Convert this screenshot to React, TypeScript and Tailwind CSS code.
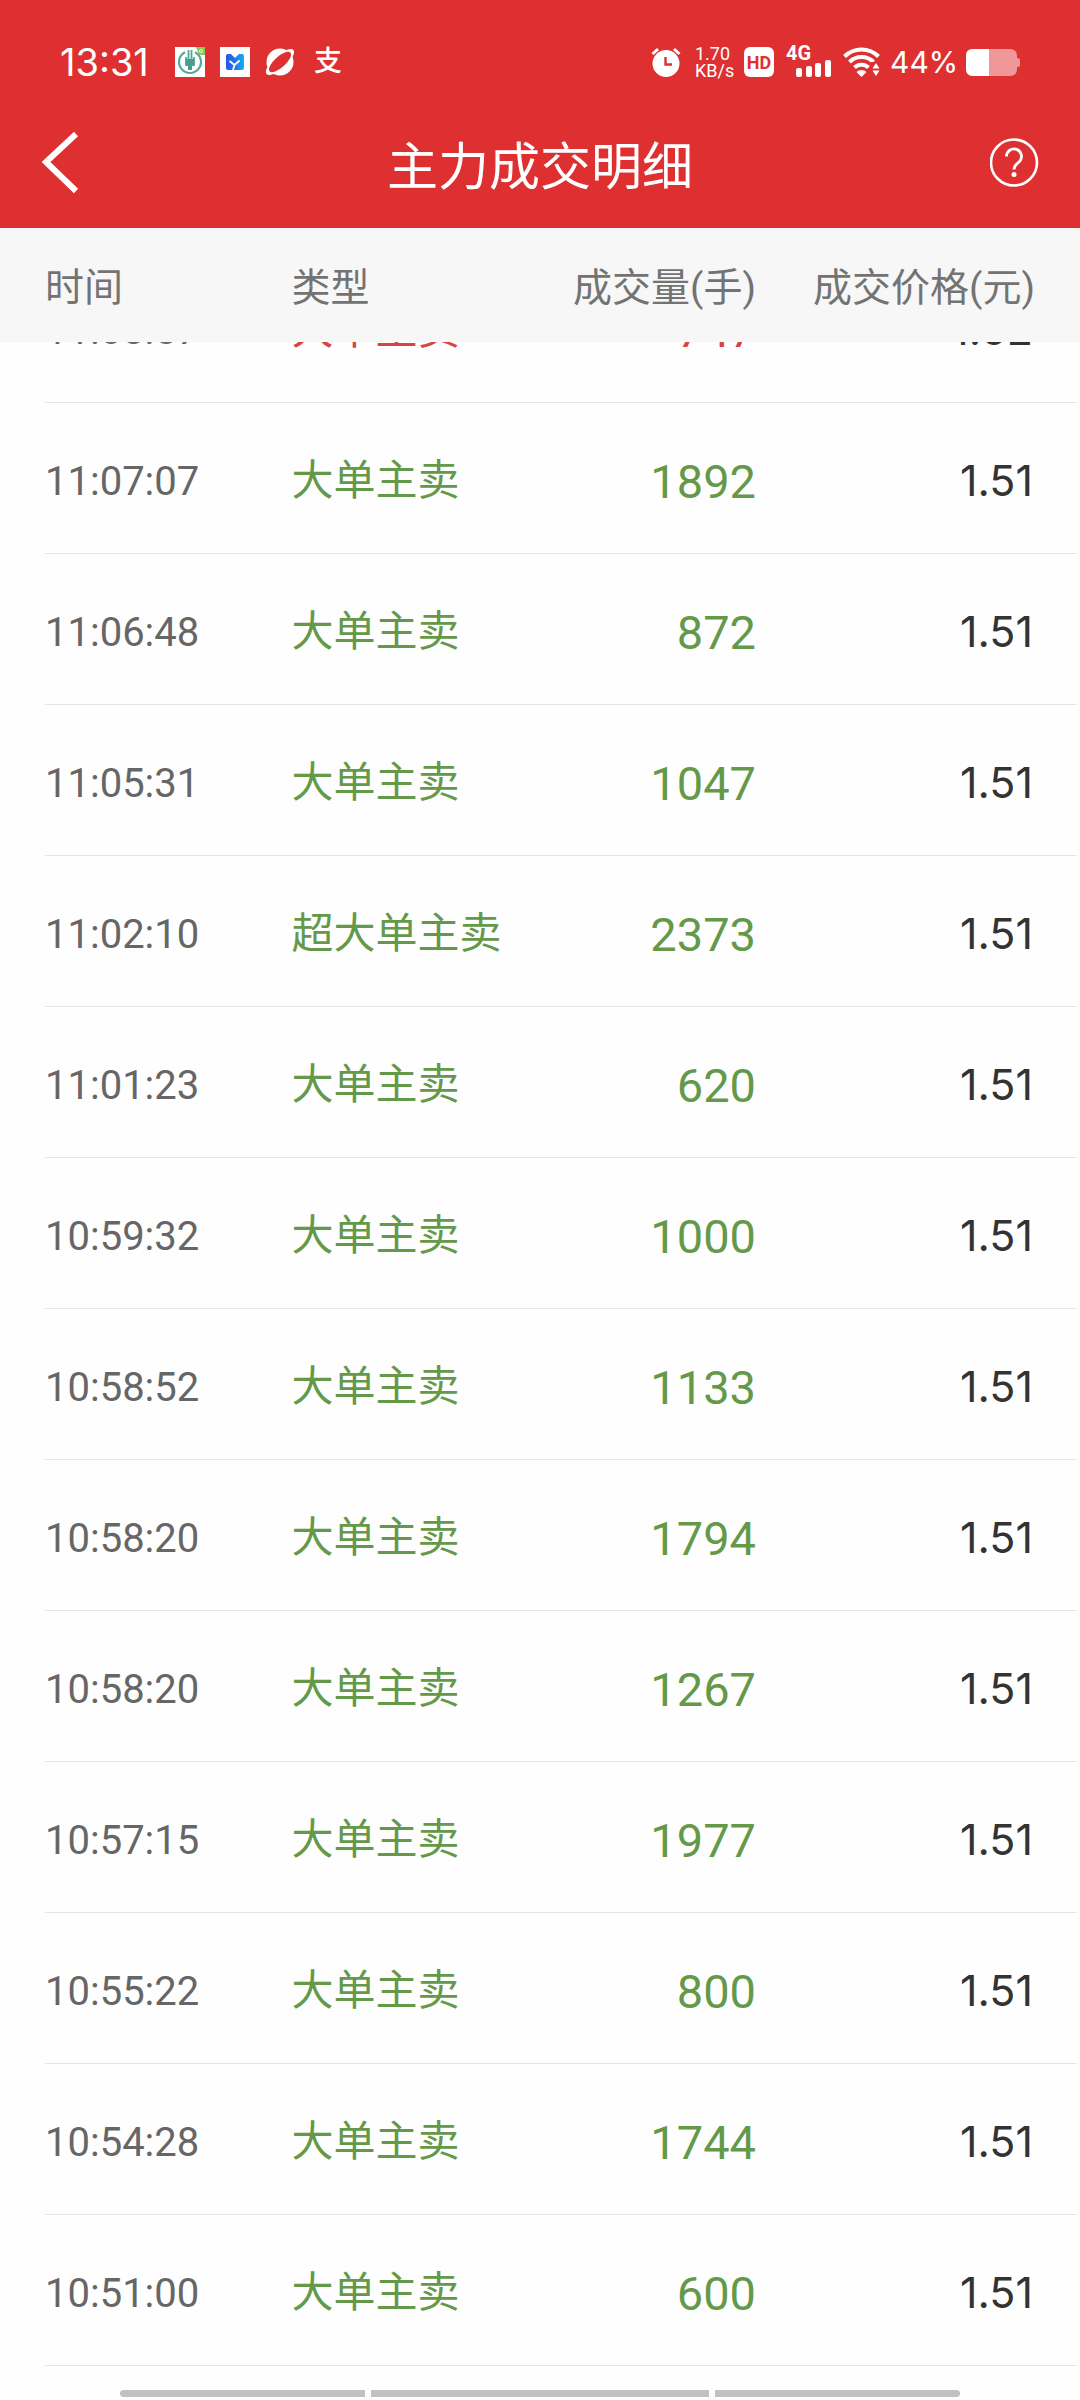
import { useLayoutEffect, useRef } from 'react';

const trades = [
    { time: '11:08:57', type: '大单主卖', volume: 747, price: '1.52', up: true },
    { time: '11:07:07', type: '大单主卖', volume: 1892, price: '1.51' },
    { time: '11:06:48', type: '大单主卖', volume: 872, price: '1.51' },
    { time: '11:05:31', type: '大单主卖', volume: 1047, price: '1.51' },
    { time: '11:02:10', type: '超大单主卖', volume: 2373, price: '1.51' },
    { time: '11:01:23', type: '大单主卖', volume: 620, price: '1.51' },
    { time: '10:59:32', type: '大单主卖', volume: 1000, price: '1.51' },
    { time: '10:58:52', type: '大单主卖', volume: 1133, price: '1.51' },
    { time: '10:58:20', type: '大单主卖', volume: 1794, price: '1.51' },
    { time: '10:58:20', type: '大单主卖', volume: 1267, price: '1.51' },
    { time: '10:57:15', type: '大单主卖', volume: 1977, price: '1.51' },
    { time: '10:55:22', type: '大单主卖', volume: 800, price: '1.51' },
    { time: '10:54:28', type: '大单主卖', volume: 1744, price: '1.51' },
    { time: '10:51:00', type: '大单主卖', volume: 600, price: '1.51' },
];

function BankIcon() {
    return (
        <svg width="30" height="30" viewBox="0 0 30 30">
            <rect width="30" height="30" fill="#fff" />
            <path d="M21 0h9v8h-6z" fill="#8cc653" />
            <circle cx="26" cy="4" r="1.5" fill="none" stroke="#e4f5d8" />
            <path d="M10 5.2A11 11 0 1 0 20 5.200" fill="none" stroke="#55a99a" strokeWidth="2.200" />
            <path d="M11 10v8h8v-8M13.500 3v14M16.500 3v14" fill="none" stroke="#4da795" strokeWidth="1.800" />
            <path d="M11 12h8v5l-2 2v4h-4v-4l-2-2z" fill="#469d8c" />
        </svg>
    );
}

function MailIcon() {
    return (
        <svg width="30" height="30" viewBox="0 0 30 30">
            <defs>
                <linearGradient id="mail" x1="0" x2="1">
                    <stop offset="0" stopColor="#2557e6" />
                    <stop offset="0.500" stopColor="#1f74ee" />
                    <stop offset="1" stopColor="#12b4f4" />
                </linearGradient>
            </defs>
            <rect width="30" height="30" fill="#fff" />
            <path d="M6 9q0-2 2-2h3l4 4 4-4h3q2 0 2 2v12q0 2-2 2H8q-2 0-2-2z" fill="url(#mail)" />
            <path d="M9.500 14l5 4 5-4.500M14.500 18l-1.500 5" fill="none" stroke="#fff" strokeWidth="1.800" />
        </svg>
    );
}

function PlanetIcon() {
    return (
        <svg width="30" height="30" viewBox="0 0 30 30">
            <circle cx="15" cy="15" r="13.500" fill="#fff" />
            <ellipse cx="15" cy="15" rx="18" ry="6.500" transform="rotate(-42 15 15)" fill="#fff" />
            <ellipse cx="15" cy="15" rx="14" ry="5.500" transform="rotate(-42 15 15)" fill="#de3031" />
        </svg>
    );
}

function AlarmIcon() {
    return (
        <svg width="30" height="30" viewBox="0 0 30 30">
            <path d="M1.500 7 7 2M28.500 7 23 2" stroke="#fff" strokeWidth="3" />
            <circle cx="15" cy="16.500" r="13.500" fill="#fff" />
            <path d="M14.500 10v7.500H21" fill="none" stroke="#de3031" strokeWidth="2.400" />
        </svg>
    );
}

function SignalBars() {
    return (
        <svg width="36" height="17" viewBox="0 0 36 17" fill="#fff">
            <rect x="0" y="8" width="6" height="9" rx="2" />
            <rect x="10" y="6" width="6" height="11" rx="2" />
            <rect x="19" y="3" width="6" height="14" rx="2" />
            <rect x="29" y="0" width="6" height="17" rx="2" />
        </svg>
    );
}

function WifiIcon() {
    return (
        <svg width="37" height="30" viewBox="0 0 37 30">
            <g fill="none" stroke="#fff" strokeWidth="4">
                <path d="M1.500 9.500a24 24 0 0 1 34 0" />
                <path d="M6.500 15a17 17 0 0 1 24 0" />
                <path d="M11.500 20.500a10 10 0 0 1 14 0" />
            </g>
            <path d="M13.500 25a7 7 0 0 1 10 0L18.500 30z" fill="#fff" />
            <path d="M28 15h10v15H28z" fill="#de3031" />
            <path d="M29.500 21.500 33 16l3.500 5.500zM29.500 23.500l3.500 5.500 3.500-5.500z" fill="#fff" />
        </svg>
    );
}

function BatteryIcon() {
    return (
        <svg width="54" height="27" viewBox="0 0 54 27">
            <path d="M7 0h37q7 0 7 7v2q3 0 3 2v5q0 2-3 2v2q0 7-7 7H7q-7 0-7-7V7q0-7 7-7z" fill="#f09899" />
            <path d="M7 0h16v27H7q-7 0-7-7V7q0-7 7-7z" fill="#fff" />
        </svg>
    );
}

function StatusBar() {
    return (
        <div className="flex h-[124px] items-center justify-between px-[60px] text-white">
            <div className="flex items-center">
                <span className="w-[115px] font-[Inter] text-[38px] leading-none">13:31</span>
                <div className="flex items-center gap-[15px]">
                    <BankIcon />
                    <MailIcon />
                    <PlanetIcon />
                    <span className="pl-1 text-[28px] leading-7 font-medium">支</span>
                </div>
            </div>
            <div className="flex items-center">
                <AlarmIcon />
                <div className="ml-3.5 flex w-[49px] flex-col text-[18px] leading-[17px]">
                    <span>1.70</span>
                    <span>KB/s</span>
                </div>
                <span className="flex h-[30px] w-[30px] items-center justify-center rounded-md bg-white text-[18px] font-bold text-[#de3031]">
                    HD
                </span>
                <div className="ml-3 flex w-[57px] flex-col">
                    <span className="h-[13px] text-[20px] leading-[13px] font-bold">4G</span>
                    <span className="pl-2.5">
                        <SignalBars />
                    </span>
                </div>
                <WifiIcon />
                <span className="w-[86px] pl-2.5 font-[Inter] text-[30px] leading-none">44%</span>
                <BatteryIcon />
            </div>
        </div>
    );
}

function TitleBar() {
    return (
        <div className="flex h-[104px] items-start justify-between px-10 text-white">
            <button type="button" aria-label="返回" className="w-[50px] pt-2">
                <svg width="40" height="62" viewBox="0 0 40 62">
                    <path d="M36 2 6 30l30 29" fill="none" stroke="#fff" strokeWidth="6" />
                </svg>
            </button>
            <h1 className="pt-3 text-[51px] leading-[64px]">主力成交明细</h1>
            <button type="button" aria-label="帮助" className="w-[50px] pt-3.5">
                <svg width="50" height="50" viewBox="0 0 50 50" fill="none" stroke="#fff">
                    <circle cx="24" cy="24.500" r="23" strokeWidth="2.600" />
                    <path d="M16.500 18.500a7.500 7.500 0 1 1 13 5c-3 3-5.500 4-5.500 8" strokeWidth="2.800" />
                    <circle cx="24" cy="36.500" r="2.500" fill="#fff" stroke="none" />
                </svg>
            </button>
        </div>
    );
}

export default function App() {
    const scroller = useRef<HTMLDivElement>(null);

    // The list opens slightly scrolled, under its sticky header
    useLayoutEffect(() => {
        if (scroller.current) scroller.current.scrollTop = 90;
    }, []);

    return (
        <div className="flex h-screen flex-col bg-[#fefefe] font-[Roboto,'Noto_Sans_CJK_SC',sans-serif]">
            <header className="shrink-0 bg-[#de3031]">
                <StatusBar />
                <TitleBar />
            </header>

            <main ref={scroller} className="min-h-0 flex-1 overflow-y-auto pb-12 [scrollbar-width:none]">
                <table className="w-full table-fixed border-separate border-spacing-0">
                    <thead className="sticky top-0 z-10 bg-[#f7f7f7] text-[39px] text-[#737373]">
                        <tr className="h-[114px]">
                            <th className="w-[27%] p-0 pt-1.5 pl-[45px] text-left font-normal">时间</th>
                            <th className="w-[23%] p-0 pt-1.5 text-left font-normal">类型</th>
                            <th className="w-[20%] p-0 pt-1.5 text-right font-normal">成交量(手)</th>
                            <th className="w-[30%] p-0 pt-1.5 pr-[45px] text-right font-normal">成交价格(元)</th>
                        </tr>
                    </thead>
                    <tbody>
                        {trades.map((trade, i) => (
                            <tr key={i} className={trade.up ? 'text-[#d84343]' : 'text-[#64994a]'}>
                                <td className="p-0 pl-[45px]">
                                    <div className="flex h-[151px] items-center border-b border-[#e6e6e6] pt-2 text-[40px] text-[#666]">
                                        {trade.time}
                                    </div>
                                </td>
                                <td className="p-0">
                                    <div className="flex h-[151px] items-center border-b border-[#e6e6e6] pt-1 text-[42px]">
                                        {trade.type}
                                    </div>
                                </td>
                                <td className="p-0">
                                    <div className="flex h-[151px] items-center justify-end border-b border-[#e6e6e6] pt-2 text-[47px]">
                                        {trade.volume}
                                    </div>
                                </td>
                                <td className="p-0 pr-[3px]">
                                    <div className="flex h-[151px] items-center justify-end border-b border-[#e6e6e6] pt-1 pr-11 font-[Inter] text-[43px] text-[#333]">
                                        {trade.price}
                                    </div>
                                </td>
                            </tr>
                        ))}
                    </tbody>
                </table>
            </main>

            {/* System navigation hints */}
            <div className="fixed inset-x-0 bottom-[3px] z-20 flex h-[7px] gap-1.5 px-[120px]">
                <div className="flex-[8] rounded-l-full bg-[#c1c1c1]" />
                <div className="flex-[11] bg-[#c1c1c1]" />
                <div className="flex-[8] rounded-r-full bg-[#c1c1c1]" />
            </div>
        </div>
    );
}
